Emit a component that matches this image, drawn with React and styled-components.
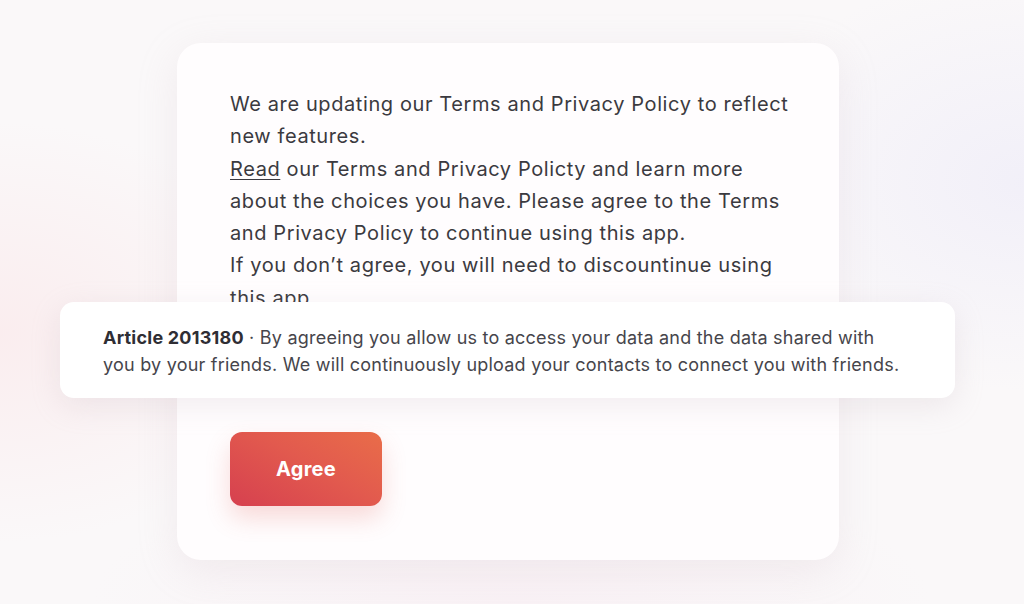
import styled, { createGlobalStyle } from "styled-components"

const GlobalStyle = createGlobalStyle`
  html, body {
    margin: 0;
    padding: 0;
    width: 1024px;
    height: 604px;
    overflow: hidden;
    font-family: Inter, "Noto Sans", sans-serif;
  }
`

const Page = styled.div`
  width: 1024px;
  height: 604px;
  box-sizing: border-box;
  padding-top: 43px;
  display: flex;
  justify-content: center;
  align-items: flex-start;
  background:
    radial-gradient(ellipse 420px 300px at 0% 55%, rgba(250, 228, 230, 0.55), transparent 70%),
    radial-gradient(ellipse 420px 300px at 100% 30%, rgba(238, 236, 248, 0.7), transparent 70%),
    radial-gradient(ellipse 600px 200px at 50% 100%, rgba(248, 236, 242, 0.6), transparent 70%),
    #faf8f9;
`

const Card = styled.div`
  position: relative;
  width: 662px;
  height: 517px;
  box-sizing: border-box;
  padding: 45px 30px 54px 53px;
  margin-left: -8px;
  background: #fffdfe;
  border-radius: 24px;
  box-shadow: 0 10px 40px rgba(200, 180, 190, 0.18);
  display: flex;
  flex-direction: column;
  justify-content: space-between;
  align-items: flex-start;
`

const Body = styled.p`
  margin: 0;
  font-size: 20px;
  line-height: 32.3px;
  color: #3b3a40;
  letter-spacing: 0.6px;
  max-width: 572px;
`

const Link = styled.span`
  text-decoration: underline;
  text-underline-offset: 3px;
  text-decoration-thickness: 1px;
`

const Notice = styled.div`
  position: absolute;
  left: -117px;
  top: 259px;
  width: 895px;
  height: 96px;
  box-sizing: border-box;
  padding: 22px 47px 22px 43px;
  background: #ffffff;
  border-radius: 14px;
  box-shadow: 0 8px 30px rgba(190, 170, 180, 0.2);
  font-size: 18px;
  line-height: 27px;
  color: #46454b;
  letter-spacing: 0.22px;
`

const Strong = styled.b`
  font-weight: 700;
  color: #2f2e34;
`

const AgreeButton = styled.button`
  width: 152px;
  height: 74px;
  border: none;
  border-radius: 12px;
  background: linear-gradient(30deg, #d6404f 0%, #e25a4e 55%, #e96d49 100%);
  color: #fff;
  font-family: Inter, "Noto Sans", sans-serif;
  font-size: 20px;
  font-weight: 700;
  letter-spacing: 0.3px;
  box-shadow: 0 12px 24px rgba(225, 90, 80, 0.22);
  cursor: pointer;
`

const App = () => {
  return (
    <>
      <GlobalStyle />
      <Page>
        <Card>
          <Body>
            We are updating our Terms and Privacy Policy to reflect new features.
            <br />
            <Link>Read</Link> our Terms and Privacy Policty and learn more about the choices you have. Please agree to the Terms and Privacy Policy to continue using this app.
            <br />
            If you don’t agree, you will need to discountinue using this app.
          </Body>
          <AgreeButton>Agree</AgreeButton>
          <Notice>
            <Strong>Article 2013180</Strong> · By agreeing you allow us to access your data and the data shared with you by your friends. We will continuously upload your contacts to connect you with friends.
          </Notice>
        </Card>
      </Page>
    </>
  )
}

export default App
